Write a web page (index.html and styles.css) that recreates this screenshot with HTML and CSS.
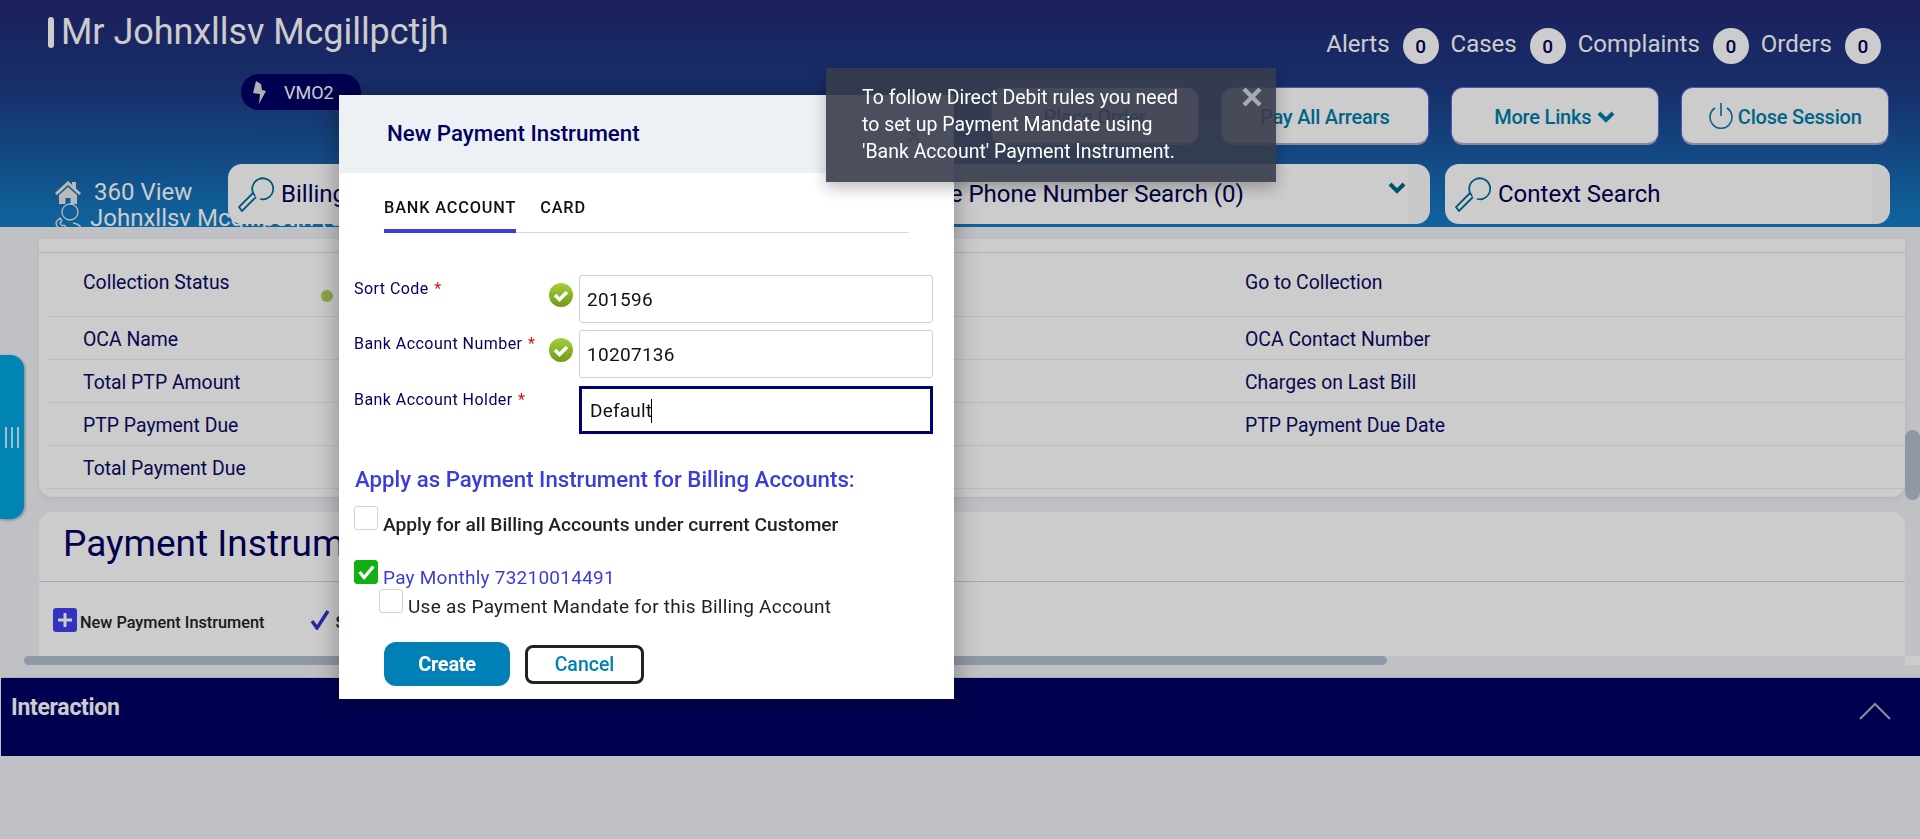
FILE: index.html
```html
<!DOCTYPE html>
<html lang="en">
<head>
<meta charset="utf-8">
<title>New Payment Instrument</title>
<link rel="stylesheet" href="styles.css">
</head>
<body>
<header class="top">
  <div class="row-a">
    <h1 class="cust"><span class="cust-bar"></span>Mr Johnxllsv Mcgillpctjh</h1>
    <div class="counts">
      <span class="count-label">Alerts</span><span class="badge">0</span>
      <span class="count-label">Cases</span><span class="badge">0</span>
      <span class="count-label">Complaints</span><span class="badge">0</span>
      <span class="count-label">Orders</span><span class="badge">0</span>
    </div>
  </div>
  <div class="row-b">
    <div class="pill">
      <svg class="pill-icon" viewBox="0 0 14 23"><path d="M4 0l5 3 1 6 4 1-7 13 1-10-7-1z" fill="#ddd"/></svg>
      <span>VMO2</span>
    </div>
    <div class="actions">
      <a class="btn">Place Order</a>
      <a class="btn">Pay All Arrears</a>
      <a class="btn">More Links
        <svg class="btn-chev" viewBox="0 0 18 12"><path d="M2 2l7 7 7-7" fill="none" stroke="currentColor" stroke-width="4"/></svg>
      </a>
      <a class="btn">
        <svg class="power" viewBox="0 0 26 26"><path d="M7 5a11 11 0 1 0 12 0M13 0v13" fill="none" stroke="currentColor" stroke-width="1.6"/></svg>
        Close Session
      </a>
    </div>
  </div>
  <div class="row-c">
    <nav class="crumbs">
      <div class="crumb">
        <svg class="home" viewBox="0 0 26 24"><path d="M13 1L0 13l2 2 11-10 11 10 2-2-5-4.6V2h-4v2.8zM4 15v9h6.500v-6h5v6H22v-9l-9-8z" fill="#e8e8e8"/></svg>
        <span>360 View</span>
      </div>
      <div class="crumb crumb-user">
        <svg class="user" viewBox="0 0 30 32"><g fill="none" stroke="#e8e8e8" stroke-width="1.300"><circle cx="17" cy="10" r="8"/><path d="M3 20l4-4 2 3-2 2 2 3 2-1 2 2-3 3c-4-1-7-4-7-8zM10 31h18v-4c0-3-3-5-8-6"/></g></svg>
        <span>Johnxllsv Mcgillpctjh (Customer)</span>
      </div>
    </nav>
    <div class="search search-billing">
      <svg class="key" viewBox="0 0 36 36"><g fill="none" stroke="currentColor" stroke-width="1.800"><path d="M17 20a10.500 10.500 0 1 1 5 3"/><path d="M15 17L1 31l3 4 14-14"/></g></svg>
      <span>Billing Account Search</span>
    </div>
    <div class="search search-phone">
      <span class="phone-text">Mobile Phone Number Search (0)</span>
      <svg class="search-chev" viewBox="0 0 18 12"><path d="M2 2l7 7 7-7" fill="none" stroke="currentColor" stroke-width="4"/></svg>
    </div>
    <div class="search search-context">
      <svg class="key" viewBox="0 0 36 36"><g fill="none" stroke="currentColor" stroke-width="1.800"><path d="M17 20a10.500 10.500 0 1 1 5 3"/><path d="M15 17L1 31l3 4 14-14"/></g></svg>
      <span>Context Search</span>
    </div>
  </div>
</header>

<main class="content">
  <div class="handle"><i></i><i></i><i></i></div>
  <section class="card card-info">
    <div class="info-strip"></div>
    <div class="info-row info-first"><span>Collection Status</span><span class="dot-cell"><i class="dot"></i></span><span>Go to Collection</span></div>
    <div class="info-row"><span>OCA Name</span><span></span><span>OCA Contact Number</span></div>
    <div class="info-row"><span>Total PTP Amount</span><span></span><span>Charges on Last Bill</span></div>
    <div class="info-row"><span>PTP Payment Due</span><span></span><span>PTP Payment Due Date</span></div>
    <div class="info-row"><span>Total Payment Due</span><span></span><span></span></div>
  </section>
  <section class="card card-pay">
    <h2 class="pay-title">Payment Instruments</h2>
    <div class="pay-tools">
      <span class="plus-box"><svg viewBox="0 0 24 24"><path d="M12 5v14M5 12h14" stroke="#fff" stroke-width="3"/></svg></span>
      <span class="tool-text">New Payment Instrument</span>
      <svg class="tool-check" viewBox="0 0 20 20"><path d="M2 11l5 7L18 1" fill="none" stroke="#3434c8" stroke-width="3.500"/></svg>
      <span class="tool-text">Set as Default</span>
    </div>
  </section>
  <div class="vbar"></div>
  <div class="hbar"></div>
  <div class="corner"></div>
</main>

<section class="interaction">
  <span class="interaction-title">Interaction</span>
  <svg class="up" viewBox="0 0 32 18"><path d="M1 17L16 2l15 15" fill="none" stroke="#b0b0c0" stroke-width="2"/></svg>
</section>

<div class="scrim"></div>

<div class="modal">
  <div class="modal-head">
    <span class="modal-title">New Payment Instrument</span>
    <svg class="modal-x" viewBox="0 0 14 14"><path d="M2 2l10 10M12 2L2 12" stroke="#8a8f99" stroke-width="2.500"/></svg>
  </div>
  <div class="tabs">
    <span class="tab tab-on">BANK ACCOUNT</span>
    <span class="tab">CARD</span>
  </div>
  <div class="form">
    <div class="form-row">
      <label class="lbl">Sort Code <b>*</b></label>
      <svg class="ok" viewBox="0 0 24 24"><defs><linearGradient id="g" x1="0" y1="0" x2="0" y2="1"><stop offset="0" stop-color="#a4cf3a"/><stop offset="1" stop-color="#6f9a18"/></linearGradient></defs><circle cx="12" cy="12" r="12" fill="url(#g)"/><path d="M6 12l4.500 4.500L18 9" fill="none" stroke="#fff" stroke-width="3.500"/></svg>
      <div class="field">201596</div>
    </div>
    <div class="form-row">
      <label class="lbl">Bank Account Number <b>*</b></label>
      <svg class="ok" viewBox="0 0 24 24"><circle cx="12" cy="12" r="12" fill="url(#g)"/><path d="M6 12l4.500 4.500L18 9" fill="none" stroke="#fff" stroke-width="3.500"/></svg>
      <div class="field">10207136</div>
    </div>
    <div class="form-row">
      <label class="lbl lbl-holder">Bank Account Holder <b>*</b></label>
      <div class="field field-focus">Default<i class="caret"></i></div>
    </div>
    <h3 class="apply">Apply as Payment Instrument for Billing Accounts:</h3>
    <div class="chk-row chk-all"><span class="box"></span><span class="chk-strong">Apply for all Billing Accounts under current Customer</span></div>
    <div class="chk-row chk-acc"><span class="box box-on"><svg viewBox="0 0 24 24"><path d="M5 12l5 6L20 6" fill="none" stroke="#fff" stroke-width="3.500"/></svg></span><span class="chk-link">Pay Monthly 73210014491</span></div>
    <div class="chk-row chk-mand"><span class="box"></span><span class="chk-plain">Use as Payment Mandate for this Billing Account</span></div>
    <div class="form-actions">
      <a class="create">Create</a>
      <a class="cancel">Cancel</a>
    </div>
  </div>
</div>

<div class="toast">
  <p class="toast-text">To follow Direct Debit rules you need<br>to set up Payment Mandate using<br>'Bank Account' Payment Instrument.</p>
  <svg class="toast-x" viewBox="0 0 20 20"><path d="M2 2l16 16M18 2L2 18" stroke="#a3abb9" stroke-width="4.500"/></svg>
</div>
</body>
</html>
```
FILE: styles.css
```css
* { box-sizing: border-box; }
html, body { margin: 0; height: 839px; overflow: hidden; }
body {
  background: #f1f2f7;
  font-family: Roboto, "Liberation Sans", sans-serif;
  color: #00005f;
  position: relative;
}
h1, h2, h3, p { margin: 0; font-weight: 400; }

/* header */
.top {
  height: 227px;
  background: linear-gradient(#232773 0%, #1d3c85 40%, #137ec6 100%);
  overflow: hidden;
  color: #fff;
}
.row-a { height: 74px; display: flex; justify-content: space-between; padding: 17px 39px 0 48px; }
.cust { display: flex; align-items: flex-start; font-size: 36px; line-height: 31px; font-weight: 400; letter-spacing: -.06px; }
.cust-bar { width: 6px; height: 31px; border-radius: 3px; background: #fff; margin-right: 7px; }
.counts { display: flex; align-items: flex-start; margin-top: 11px; }
.count-label { font-size: 24px; line-height: 32px; font-weight: 400; margin-right: 13px; }
.badge {
  width: 36px; height: 36px; border-radius: 50%;
  background: #fff; color: #00005f;
  display: flex; align-items: center; justify-content: center;
  font-size: 19px; font-weight: 500;
  margin-right: 12px;
}
.badge:last-child { margin-right: 0; }

.row-b { height: 90px; display: flex; justify-content: space-between; padding: 0 31px 0 241px; align-items: flex-start; }
.pill {
  width: 120px; height: 36px; border-radius: 18px;
  background: #000064; display: flex; align-items: center;
  padding-left: 11px; font-size: 18px; font-weight: 400;
}
.pill-icon { width: 14px; height: 23px; margin-right: 18px; }
.actions { display: flex; gap: 21.500px; margin-top: 13px; }
.btn {
  width: 208.500px; height: 58px; border-radius: 12px;
  background: #fff; border: 1px solid #6a6ae0; border-bottom: 2px solid #a9a9c8;
  color: #007cab; font-size: 20px; font-weight: 500; letter-spacing: -.2px;
  display: flex; align-items: center; justify-content: center; gap: 6px;
  padding-top: 2px;
}
.btn-chev { width: 18px; height: 12px; }
.power { width: 26px; height: 26px; margin-right: -2px; margin-top: -2px; }

.row-c { height: 63px; display: flex; }
.crumbs { width: 228px; flex: none; padding: 14px 0 0 53px; white-space: nowrap; }
.crumb { display: flex; align-items: center; height: 28px; font-size: 24px; font-weight: 400; }
.home { width: 26px; height: 24px; margin: 0 13px 0 2px; }
.crumb-user { margin-top: -2px; }
.user { width: 30px; height: 32px; margin-right: 7px; flex: none; }
.search {
  position: relative; z-index: 1;
  height: 60px; border-radius: 14px; background: #fff;
  color: #000050; font-size: 24px; display: flex; align-items: center;
  white-space: nowrap; overflow: hidden;
}
.search .key { color: #006f96; width: 36px; height: 36px; flex: none; margin-right: 7px; }
.search-billing { width: 412px; padding-left: 10px; }
.search-phone { width: 770px; margin-left: 20px; padding-left: 230px; border-right: 21px solid #fbfbfb; }
.phone-text { width: 507px; flex: none; }
.search-chev { width: 18px; height: 12px; color: #00648c; margin: -12px 0 0 -9px; flex: none; }
.search-context { width: 445px; margin-left: 15px; padding-left: 10px; border-right: 18px solid #fbfbfb; }

/* content */
.content { position: relative; height: 450px; padding: 12px 15px 0 39px; overflow: hidden; }
.card { background: #fff; }
.card-info { height: 258px; border-radius: 0 0 14px 14px; padding-left: 8px; box-shadow: 0 2px 6px rgba(0,0,0,.06); }
.info-strip { height: 14px; margin-left: -8px; border-bottom: 1px solid #dcdcdc; }
.info-row {
  display: grid; grid-template-columns: 238px 924px 1fr;
  height: 43px; padding: 2px 0 0 36px; align-items: center;
  border-bottom: 1px solid #ececec;
  font-size: 19.400px; color: #0a0a64;
}
.info-first { height: 64px; align-items: start; padding-top: 18px; }
.dot-cell { display: block; height: 20px; }
.dot { display: block; width: 12px; height: 12px; border-radius: 50%; background: #b2cf5d; margin-top: 19px; }

.card-pay { height: 144px; margin-top: 15px; border-radius: 14px 14px 0 0; }
.pay-title { height: 70px; padding: 11px 0 0 24px; font-size: 37px; line-height: 42px; border-bottom: 1px solid #ccd6e2; color: #00005f; }
.pay-tools { display: flex; align-items: center; padding: 26px 0 0 14px; }
.plus-box { width: 24px; height: 24px; border-radius: 3px; background: #4040f0; margin-right: 3px; display: block; }
.plus-box svg { display: block; }
.tool-text { font-size: 16.300px; font-weight: 500; color: #222; margin-top: 4px; }
.tool-check { width: 20px; height: 20px; margin: 0 5px 0 46px; }

.handle {
  position: absolute; left: 0; top: 128px; width: 24px; height: 164px;
  background: #00a5e0; border-radius: 0 14px 14px 0;
  display: flex; gap: 4px; align-items: center; justify-content: center;
  box-shadow: 1px 1px 3px rgba(0,0,0,.35);
}
.handle i { width: 2px; height: 21px; background: #fff; opacity: .8; }
.vbar { position: absolute; right: 0; top: 203px; width: 15px; height: 70px; border-radius: 8px; background: #b3bfcf; }
.hbar { position: absolute; left: 24px; top: 429px; width: 1363px; height: 9px; border-radius: 5px; background: #b3bfcf; }
.corner { position: absolute; right: 0; top: 429px; width: 15px; height: 9px; background: #fff; }

.interaction {
  height: 79px; margin-left: 1px; background: #000064;
  display: flex; justify-content: space-between; align-items: flex-start;
  padding: 16px 29px 0 10px;
  border-top: 1px solid #d8d8e0;
}
.interaction-title { font-size: 23px; font-weight: 700; color: #fff; letter-spacing: -.3px; }
.up { width: 32px; height: 18px; margin-top: 8px; }

.scrim { position: fixed; inset: 0; z-index: 2; background: rgba(0,0,0,.2); }

/* modal */
.modal {
  position: absolute; z-index: 3; left: 339px; top: 95px; width: 615px; height: 604px;
  background: #fff; overflow: hidden;
  box-shadow: 0 0 24px rgba(0,0,0,.35);
}
.modal-head { height: 78px; background: #edf0f5; display: flex; align-items: center; justify-content: space-between; padding: 0 33px 2px 48px; }
.modal-title { font-size: 22.300px; font-weight: 500; color: #00005f; }
.modal-x { width: 14px; height: 14px; margin-top: 6px; }
.tabs { height: 60px; margin: 0 45px; display: flex; gap: 24px; align-items: flex-start; border-bottom: 1px solid #d9dbe3; }
.tab { height: 60px; padding-top: 25px; font-size: 16.300px; font-weight: 500; letter-spacing: .85px; color: #111; line-height: 20px; }
.tab-on { border-bottom: 4px solid #3c3cdc; }
.form { padding: 42px 21px 0 15px; }
.form-row { display: flex; height: 48px; margin-bottom: 8px; position: relative; }
.form-row:first-child { margin-bottom: 7px; }
.lbl { width: 195px; flex: none; font-size: 16px; line-height: 28px; color: #00005f; letter-spacing: .45px; white-space: nowrap; }
.lbl b { color: #e01010; font-weight: 400; margin-left: 1px; }
.lbl-holder { width: 225px; }
.ok { width: 24px; height: 24px; margin: 8px 6px 0 0; flex: none; }
.field {
  width: 354px; height: 48px; border: 1px solid #cfcfd4; border-radius: 3px;
  font-size: 19px; line-height: 48px; padding-left: 7px; color: #111; letter-spacing: .3px;
}
.field-focus { border: 3px solid #00006e; border-radius: 0; padding-left: 8px; line-height: 44px; letter-spacing: .2px; }
.caret { display: inline-block; width: 1px; height: 24px; background: #000; vertical-align: -6px; margin-left: -1px; }
.apply { font-size: 22.250px; font-weight: 500; color: #3c3cdc; line-height: 28px; margin: 31px 0 0 1px; white-space: nowrap; }
.chk-row { display: flex; align-items: flex-start; white-space: nowrap; }
.box { width: 24px; height: 24px; border: 1px solid #ced2de; border-radius: 3px; background: #fff; flex: none; margin-right: 5px; }
.box svg { display: block; width: 22px; height: 22px; }
.box-on { background: #12b012; border-color: #12b012; }
.chk-all { margin-top: 13px; height: 54px; }
.chk-acc { height: 29px; }
.chk-mand { margin-left: 25px; height: 53px; }
.chk-strong { font-size: 19.200px; font-weight: 500; color: #222; line-height: 24px; margin-top: 7px; }
.chk-link { font-size: 19px; color: #3c3cdc; line-height: 24px; margin-top: 6px; letter-spacing: .25px; }
.chk-plain { font-size: 19px; color: #222; line-height: 24px; margin-top: 6px; letter-spacing: .25px; }
.form-actions { display: flex; align-items: center; padding-left: 30px; gap: 15px; }
.create { width: 126px; height: 44px; border-radius: 12px; background: #0080b5; color: #fff; font-weight: 700; font-size: 20px; display: flex; align-items: center; justify-content: center; letter-spacing: -.3px; }
.cancel { width: 119px; height: 39px; border-radius: 8px; border: 3px solid #222; color: #0080b5; font-weight: 500; font-size: 19.500px; display: flex; align-items: center; justify-content: center; }

/* toast */
.toast {
  position: absolute; z-index: 4; left: 826px; top: 68px; width: 450px; height: 114px;
  background: rgba(55,60,76,.9);
  padding: 16px 0 0 36px; color: #fff;
  box-shadow: 0 6px 14px rgba(0,0,0,.25);
}
.toast-text { font-size: 19.500px; line-height: 27px; font-weight: 400; white-space: nowrap; }
.toast-x { position: absolute; right: 14px; top: 19px; width: 20px; height: 20px; }
```
